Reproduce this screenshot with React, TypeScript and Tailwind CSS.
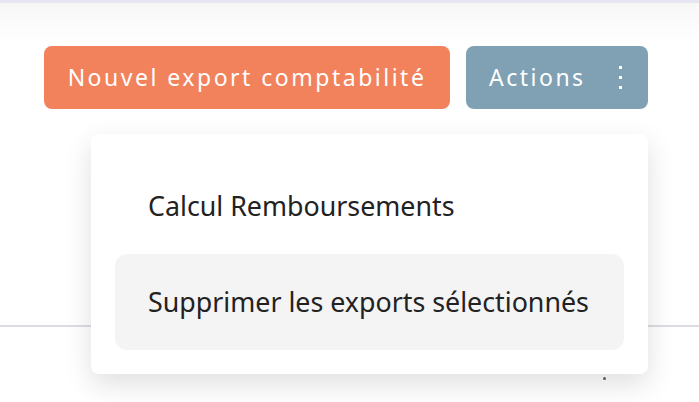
const font = { fontFamily: '"Noto Sans", "Open Sans", sans-serif' }

function Kebab() {
  return (
    <span className="flex flex-col items-center gap-[7px]">
      <span className="block w-[3px] h-[3px] bg-white" />
      <span className="block w-[3px] h-[3px] bg-white" />
      <span className="block w-[3px] h-[3px] bg-white" />
    </span>
  )
}

export default function App() {
  return (
    <div className="w-[699px] h-[402px] overflow-hidden bg-white border-t-[3px] border-[#e6e6f2]" style={font}>
      <div className="h-full bg-gradient-to-b from-[#f7f7f8] to-white to-[40px]">
        <div className="flex justify-end gap-4 pt-[43px] pr-[51px]">
          <button className="h-[63px] w-[406px] rounded-lg bg-[#f2825c] text-white text-[23px] tracking-[2.5px]">
            Nouvel export comptabilité
          </button>
          <button className="h-[63px] w-[182px] rounded-lg bg-[#7fa1b3] text-white text-[23px] tracking-[2.5px] flex items-center pl-[23px] pr-[26px] justify-between">
            <span>Actions</span>
            <Kebab />
          </button>
        </div>

        <div className="relative mt-[25px]">
          <div className="pt-[191px]">
            <div className="h-[2px] bg-[#dcdce4]" />
            <div className="ml-[603px] mt-[50px] w-[3px] h-[3px] rounded-full bg-[#666]" />
          </div>

          <div className="absolute top-0 left-[91px] w-[557px] rounded-lg bg-white p-6 shadow-[0_10px_28px_rgba(0,0,0,0.13)]">
            <div className="h-24 flex items-center px-[33px] rounded-xl text-[26.8px] text-[#222]">
              Calcul Remboursements
            </div>
            <div className="h-24 flex items-center px-[33px] rounded-xl bg-[#f4f4f4] text-[26.8px] text-[#222]">
              Supprimer les exports sélectionnés
            </div>
          </div>
        </div>
      </div>
    </div>
  )
}
